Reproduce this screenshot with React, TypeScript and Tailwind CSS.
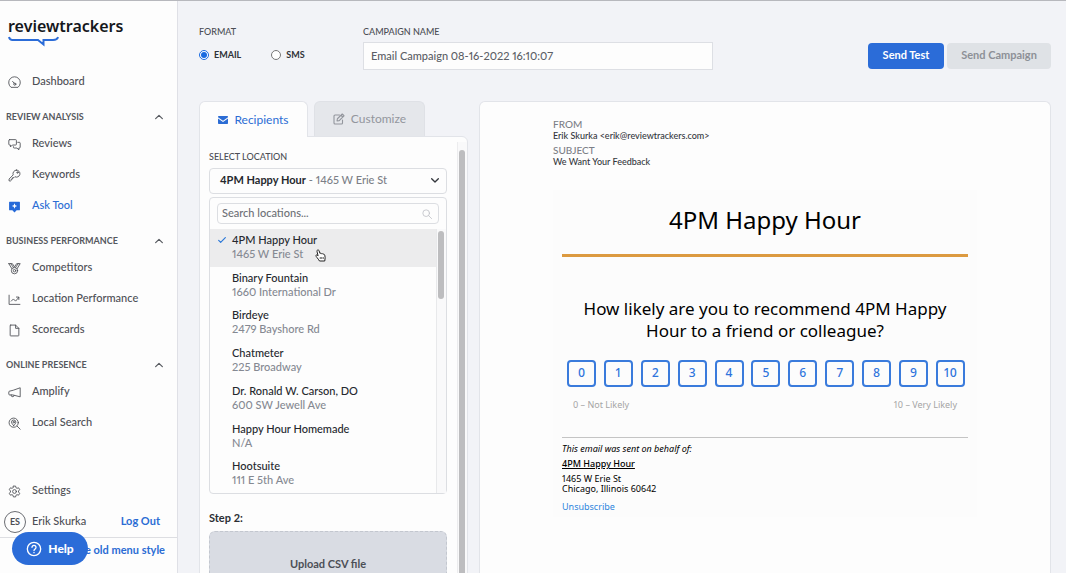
import React, { useState } from "react";

type IconProps = { children: React.ReactNode; className?: string; viewBox?: string };

function Glyph({ children, className = "h-[13px] w-[13px]", viewBox = "0 0 24 24" }: IconProps) {
  return (
    <svg
      viewBox={viewBox}
      className={className}
      fill="none"
      stroke="currentColor"
      strokeWidth="1.6"
      strokeLinecap="round"
      strokeLinejoin="round"
      aria-hidden="true"
    >
      {children}
    </svg>
  );
}

const icons = {
  dashboard: (
    <Glyph>
      <path d="M5 20.500a10.800 10.800 0 1 1 14 0z" />
      <path d="M8.500 10l3 3.500" />
      <circle cx="12.500" cy="15" r="2" />
    </Glyph>
  ),
  reviews: (
    <Glyph>
      <path d="M3 3h11a1.500 1.500 0 0 1 1.500 1.500v7A1.500 1.500 0 0 1 14 13H8l-3.500 3.500V13H3a1.500 1.500 0 0 1-1.500-1.500v-7A1.500 1.500 0 0 1 3 3z" />
      <path d="M18 8h3a1.500 1.500 0 0 1 1.500 1.500V17a1.500 1.500 0 0 1-1.500 1.500h-1V22l-3.500-3.500h-5A1.500 1.500 0 0 1 10 17v-1" />
    </Glyph>
  ),
  keywords: (
    <Glyph>
      <path d="M15.500 2a6.500 6.500 0 1 1-2.800 12.300L11 16H8.500v2.500H6V21l-1 1H2v-3.500l7.600-7.600A6.500 6.500 0 0 1 15.500 2z" />
      <circle cx="17.500" cy="6.500" r="1.300" />
    </Glyph>
  ),
  ask: (
    <svg viewBox="0 0 24 24" className="h-[13px] w-[13px]" aria-hidden="true">
      <path d="M3 3h18a1 1 0 0 1 1 1v14a1 1 0 0 1-1 1h-5l-4 4-4-4H3a1 1 0 0 1-1-1V4a1 1 0 0 1 1-1z" fill="#2569d8" />
      <path d="M12 6l1.500 3.500L17 11l-3.500 1.500L12 16l-1.500-3.500L7 11l3.500-1.500z" fill="#fff" />
    </svg>
  ),
  competitors: (
    <Glyph>
      <path d="M1.500 3H8l4 6 4-6h6.500L17 12M1.500 3L7 12M5 3l5 7M19 3l-5 7" />
      <circle cx="12" cy="16" r="5.800" />
      <circle cx="12" cy="16" r="2.300" />
    </Glyph>
  ),
  performance: (
    <Glyph>
      <path d="M2 4v17h20" />
      <path d="M6 15l4-4 4 4 6-7M15.500 7.500H20V12" />
    </Glyph>
  ),
  scorecards: (
    <Glyph>
      <path d="M5 2h9l6 6v13a1 1 0 0 1-1 1H5a1 1 0 0 1-1-1V3a1 1 0 0 1 1-1zM14 2v6h6" />
    </Glyph>
  ),
  amplify: (
    <Glyph>
      <path d="M22.500 4v16L9 16.500H3a1.500 1.500 0 0 1-1.500-1.500v-4A1.500 1.500 0 0 1 3 9.500l6-1.500zM6 16.500v1.500c0 2.500 5.500 2.500 5.500-.5" />
    </Glyph>
  ),
  search: (
    <Glyph>
      <circle cx="10.500" cy="10.500" r="8.500" />
      <path d="M17 17l5.500 5.500M10.500 16c-2-2.500-4-4.500-4-6.500a4 4 0 0 1 8 0c0 2-2 4-4 6.500z" />
      <circle cx="10.500" cy="9.500" r="1.300" />
    </Glyph>
  ),
  settings: (
    <Glyph>
      <path d="M10 2h4l.7 3 2 1.100 2.900-.9 2 3.500L19.400 11v2l2.200 2.300-2 3.500-2.900-.9-2 1.100-.7 3h-4l-.7-3-2-1.100-2.900.9-2-3.500L4.600 13v-2L2.400 8.700l2-3.500 2.900.9 2-1.100z" />
      <circle cx="12" cy="12" r="3.500" />
    </Glyph>
  ),
};

type NavItem = { label: string; icon: React.ReactNode; active?: boolean };

const sections: { title: string; items: NavItem[] }[] = [
  {
    title: "REVIEW ANALYSIS",
    items: [
      { label: "Reviews", icon: icons.reviews },
      { label: "Keywords", icon: icons.keywords },
      { label: "Ask Tool", icon: icons.ask, active: true },
    ],
  },
  {
    title: "BUSINESS PERFORMANCE",
    items: [
      { label: "Competitors", icon: icons.competitors },
      { label: "Location Performance", icon: icons.performance },
      { label: "Scorecards", icon: icons.scorecards },
    ],
  },
  {
    title: "ONLINE PRESENCE",
    items: [
      { label: "Amplify", icon: icons.amplify },
      { label: "Local Search", icon: icons.search },
    ],
  },
];

const locations = [
  { name: "4PM Happy Hour", address: "1465 W Erie St" },
  { name: "Binary Fountain", address: "1660 International Dr" },
  { name: "Birdeye", address: "2479 Bayshore Rd" },
  { name: "Chatmeter", address: "225 Broadway" },
  { name: "Dr. Ronald W. Carson, DO", address: "600 SW Jewell Ave" },
  { name: "Happy Hour Homemade", address: "N/A" },
  { name: "Hootsuite", address: "111 E 5th Ave" },
];

const scores = [0, 1, 2, 3, 4, 5, 6, 7, 8, 9, 10];

function NavLink({ item }: { item: NavItem }) {
  return (
    <a
      href="#"
      className={
        item.active
          ? "flex h-[31px] items-center gap-[11px] pl-2 text-[11px] font-medium text-[#2b6cd4]"
          : "flex h-[31px] items-center gap-[11px] pl-2 text-[11px] font-medium text-[#4d4f55]"
      }
    >
      <span className="pt-0.5">{item.icon}</span>
      {item.label}
    </a>
  );
}

function Sidebar() {
  return (
    <aside className="relative flex w-[178px] shrink-0 flex-col border-r border-[#dfe0e6] bg-[#fdfdfd]">
      <div className="h-[65px] pt-[15px] pl-2">
        <div className="font-['Noto_Sans'] text-[16px] leading-5 font-semibold text-[#15171c]">reviewtrackers</div>
        <svg viewBox="0 0 52 11" className="h-[11px] w-[52px]" fill="none" aria-hidden="true">
          <path d="M1 1c.5 2 1.500 3 3.500 3H30l5.500 4.500V4h9.500C48 4 49.500 3 50 1" stroke="#2b6cd8" strokeWidth="2" />
        </svg>
      </div>
      <nav className="flex flex-col">
        <NavLink item={{ label: "Dashboard", icon: icons.dashboard }} />
        {sections.map((section) => (
          <section key={section.title}>
            <button
              type="button"
              className="flex h-[31px] w-full items-center justify-between pt-2 pr-3.5 pl-[6px] text-[9px] font-bold text-[#55585e]"
            >
              {section.title}
              <Glyph className="h-2 w-2">
                <path d="M2 17l10-10 10 10" strokeWidth="3.500" />
              </Glyph>
            </button>
            {section.items.map((item) => (
              <NavLink key={item.label} item={item} />
            ))}
          </section>
        ))}
      </nav>
      <div className="mt-auto">
        <NavLink item={{ label: "Settings", icon: icons.settings }} />
        <div className="flex h-[31px] items-center pr-[17px] pl-1 text-[11px] font-medium text-[#4d4f55]">
          <span className="mr-1.5 flex h-[22px] w-[22px] items-center justify-center rounded-full border border-[#6b6d73] text-[9px] font-bold">
            ES
          </span>
          Erik Skurka
          <a href="#" className="ml-auto font-bold text-[#2b6cd4]">
            Log Out
          </a>
        </div>
        <div className="flex h-9 items-start justify-end border-t border-[#dddee2] pt-1 pr-3 text-[11px]">
          <a href="#" className="font-bold text-[#2b6cd4]">
            Use the old menu style
          </a>
        </div>
      </div>
      <button
        type="button"
        className="absolute bottom-2 left-3 flex h-[33px] w-19 items-center justify-center gap-1.5 rounded-full bg-[#2b6cd8] text-xs font-black text-white"
      >
        <Glyph className="h-4 w-4">
          <circle cx="12" cy="12" r="10" strokeWidth="2" />
          <path d="M9 9.500a3 3 0 1 1 4.500 2.600c-1 .6-1.500 1-1.500 2M12 17.200v.3" strokeWidth="2" />
        </Glyph>
        Help
      </button>
    </aside>
  );
}

function Toolbar() {
  const [name, setName] = useState("Email Campaign 08-16-2022 16:10:07");
  return (
    <header className="flex items-start">
      <fieldset className="w-41 shrink-0 text-[9px]">
        <legend className="h-[17px] leading-[14px] font-medium text-[#4c4e55]">FORMAT</legend>
        <div className="flex gap-[30px] pt-1.5 font-bold text-[#2f3238]">
          <label className="flex items-center gap-[5px]">
            <input type="radio" name="format" defaultChecked className="h-2.5 w-2.5 accent-[#1a6be0]" />
            EMAIL
          </label>
          <label className="flex items-center gap-[5px]">
            <input type="radio" name="format" className="h-2.5 w-2.5" />
            SMS
          </label>
        </div>
      </fieldset>
      <label className="flex max-w-[350px] grow flex-col text-[9px] font-medium text-[#4c4e55]">
        <span className="h-[17px] leading-[14px]">CAMPAIGN NAME</span>
        <input
          type="text"
          value={name}
          onChange={(e) => setName(e.target.value)}
          className="h-7 border border-[#dddfe4] bg-[#fdfdfd] px-[7px] pb-0.5 text-[11px] text-[#5c5f66] proportional-nums outline-none"
        />
      </label>
      <div className="ml-auto flex gap-[3px] pt-[18px] text-[11px] font-bold">
        <button type="button" className="h-[26px] w-19 rounded bg-[#2b6cd8] pb-0.5 text-white">
          Send Test
        </button>
        <button type="button" disabled className="h-[26px] w-[104px] rounded bg-[#dfe2e6] pb-0.5 text-[#8d9097]">
          Send Campaign
        </button>
      </div>
    </header>
  );
}

function LocationMenu() {
  return (
    <div className="mt-[3px] flex flex-col rounded-sm border border-[#dcdee2] bg-[#fdfdfd]">
      <label className="mx-[7px] my-[5px] flex h-[21px] items-center rounded-sm border border-[#dcdee2] pr-1.5 pl-1">
        <input
          type="text"
          aria-label="Search locations"
          placeholder="Search locations..."
          className="min-w-0 grow bg-transparent text-[11px] font-medium outline-none placeholder:text-[#6d7076]"
        />
        <Glyph className="h-2.5 w-2.5 text-[#bfc1c6]">
          <circle cx="10" cy="10" r="8" strokeWidth="2" />
          <path d="M16 16l7 7" strokeWidth="2" />
        </Glyph>
      </label>
      <div className="flex h-[264px] overflow-hidden">
        <ul role="listbox" aria-label="Locations" className="flex grow flex-col">
          {locations.map((place, i) => (
            <li
              key={place.name}
              role="option"
              aria-selected={i === 0}
              className={
                i === 0
                  ? "relative flex flex-1 items-start bg-[#ececed] pt-1 pl-2 text-[11px] leading-[14px] font-medium"
                  : "flex flex-1 items-start pt-1 pl-2 text-[11px] leading-[14px] font-medium"
              }
            >
              <span className="flex h-3.5 w-3.5 shrink-0 items-center text-[#2b78d8]">
                {i === 0 && (
                  <Glyph className="h-2 w-2">
                    <path d="M2 13l6 6L22 5" strokeWidth="3.500" />
                  </Glyph>
                )}
              </span>
              <span className="flex flex-col">
                <span className="text-[#25282e]">{place.name}</span>
                <span className="text-[#858992]">{place.address}</span>
              </span>
              {i === 0 && (
                <svg viewBox="0 0 22 26" className="absolute top-[20px] left-[105px] h-[13px] w-[11px]" aria-hidden="true">
                  <path
                    d="M4.500 2.500c1.500-1.500 3-.5 3.600 1L10 9c1-1 2.500-.8 3 .6 1-.8 2.500-.4 3 .8 1.500-.6 3 .2 3.500 2l.8 4.600c.3 2-.8 4-.8 7H9c-1-2.500-3.500-4.500-5.500-7.500C2.500 15 1 13.500 2 12.500c1-1 2.800-.3 4.200 1.300L4 5c-.3-1 0-2 .5-2.500z"
                    fill="#fff"
                    stroke="#222"
                    strokeWidth="2"
                    strokeLinejoin="round"
                  />
                  <path d="M10.500 16v4M13.500 16v4M16.500 16v4" stroke="#222" strokeWidth="1.400" />
                </svg>
              )}
            </li>
          ))}
        </ul>
        <div className="w-2.5 border-l border-[#e8e9eb] bg-[#f9f9fa] px-px pt-0.5">
          <div className="h-[68px] w-1.5 rounded-full bg-[#bdbdbf]" />
        </div>
      </div>
    </div>
  );
}

function RecipientsPanel() {
  return (
    <div className="flex w-[269px] shrink-0 flex-col">
      <div role="tablist" className="z-10 -mb-px flex items-start gap-1.5 text-xs">
        <button
          type="button"
          role="tab"
          aria-selected="true"
          className="flex h-9 w-[109px] items-center justify-center gap-1.5 rounded-t-md border border-b-0 border-[#e2e4e9] bg-[#fdfdfd] text-[#2b6cd4]"
        >
          <svg viewBox="0 0 20 16" className="h-2 w-2.5" aria-hidden="true">
            <path d="M1.500 0h17A1.500 1.500 0 0 1 20 1.500v1L10 9.500 0 2.500v-1A1.500 1.500 0 0 1 1.500 0zM0 5l10 7 10-7v9.500a1.500 1.500 0 0 1-1.500 1.500h-17A1.500 1.500 0 0 1 0 14.500z" fill="currentColor" />
          </svg>
          Recipients
        </button>
        <button
          type="button"
          role="tab"
          aria-selected="false"
          className="flex h-[35px] w-[111px] items-center justify-center gap-1.5 rounded-t-md border border-b-0 border-[#dfe1e6] bg-[#e5e7eb] text-[#93969d]"
        >
          <Glyph className="h-3 w-3">
            <path d="M13 4H4a2 2 0 0 0-2 2v14a2 2 0 0 0 2 2h13a2 2 0 0 0 2-2v-6" strokeWidth="2.200" />
            <path d="M8 16l.8-4.500L18.500 2 22 5.500l-9.500 9.700z M16 4.500L19.500 8" strokeWidth="2.200" />
          </Glyph>
          Customize
        </button>
      </div>
      <div className="flex grow rounded-tr-md border border-[#e2e4e9] bg-[#fdfdfd]">
        <div className="grow pt-3.5 pr-2.5 pl-[9px]">
          <div id="location-label" className="text-[9px] leading-3 font-medium text-[#4c4e55]">
            SELECT LOCATION
          </div>
          <button
            type="button"
            aria-haspopup="listbox"
            aria-expanded="true"
            aria-labelledby="location-label"
            className="mt-[5px] flex h-[26px] w-full items-center rounded-sm border border-[#dcdee2] pr-[7px] pb-0.5 pl-2.5 text-[11px] font-medium text-[#7c7f87]"
          >
            <span className="font-bold text-[#25282e]">4PM Happy Hour</span>
            <span className="ml-[3px]">- 1465 W Erie St</span>
            <Glyph className="ml-auto h-2 w-2 text-[#33363c]">
              <path d="M2 8l10 10 10-10" strokeWidth="4" />
            </Glyph>
          </button>
          <LocationMenu />
          <h2 className="mt-[17px] text-[11px] leading-[14px] font-bold text-[#2b2e34]">Step 2:</h2>
          <button
            type="button"
            className="mt-1.5 h-[68px] w-full rounded-md border border-dashed border-[#c3c7cf] bg-[#d9dce3] pb-0.5 text-[11px] font-bold text-[#4c4f56]"
          >
            Upload CSV file
          </button>
        </div>
        <div className="mt-[5px] w-2.5 border-l border-[#ececee] bg-[#f9f9fa] px-px pt-2">
          <div className="h-full w-1.5 rounded-t-full bg-[#bdbdbf]" />
        </div>
      </div>
    </div>
  );
}

function EmailPreview() {
  return (
    <section className="grow rounded-t-md border border-b-0 border-[#e2e4e9] bg-[#fdfdfd] pt-4">
      <div className="mx-auto w-[424px]">
        <dl className="text-[9px] leading-[11px] font-medium text-[#33363c]">
          <dt className="text-[10px] leading-3 text-[#7c7f87]">FROM</dt>
          <dd className="mb-[3px]">Erik Skurka &lt;erik@reviewtrackers.com&gt;</dd>
          <dt className="text-[10px] leading-3 text-[#7c7f87]">SUBJECT</dt>
          <dd>We Want Your Feedback</dd>
        </dl>
        <article className="mt-[23px] bg-[#fcfcfc] px-[9px] pt-3.5 pb-1 font-['Noto_Sans',sans-serif] text-black">
          <h1 className="text-center text-[24px] leading-8">4PM Happy Hour</h1>
          <div className="mt-[18px] h-[3px] bg-[#dc9a40]" />
          <p className="mt-[41px] px-3 text-center text-[17px] leading-[22px]">
            How likely are you to recommend 4PM Happy Hour to a friend or colleague?
          </p>
          <div className="mt-[18px] flex justify-between px-[5px] pr-[3px]">
            {scores.map((n) => (
              <button
                key={n}
                type="button"
                className="h-[27px] w-[29px] rounded-sm border-2 border-[#3a7bdc] pb-0.5 text-xs leading-4 font-medium text-[#2f74dc]"
              >
                {n}
              </button>
            ))}
          </div>
          <div className="mt-3 flex justify-between px-[11px] text-[9px] leading-3 text-[#a5a5a5]">
            <span>0 – Not Likely</span>
            <span>10 – Very Likely</span>
          </div>
          <footer className="mt-[26px] border-t border-[#c4c4c4] pt-[5px] text-[9px] leading-3">
            <p className="italic">This email was sent on behalf of:</p>
            <p className="mt-[3px] font-medium underline">4PM Happy Hour</p>
            <address className="mt-1 leading-[10px] not-italic">
              <span className="block">1465 W Erie St</span>
              <span className="block">Chicago, Illinois 60642</span>
            </address>
            <a href="#" className="mt-[7px] block text-[#2f86dc]">
              Unsubscribe
            </a>
          </footer>
        </article>
      </div>
    </section>
  );
}

export default function App() {
  return (
    <div className="flex h-screen overflow-hidden border-t border-[#b7b8bd] bg-[#f2f3f7] font-['Lato',sans-serif] proportional-nums">
      <Sidebar />
      <main className="flex min-w-0 grow flex-col pt-6 pr-[15px] pl-[21px]">
        <Toolbar />
        <div className="mt-[31px] flex grow gap-[11px]">
          <RecipientsPanel />
          <EmailPreview />
        </div>
      </main>
    </div>
  );
}
